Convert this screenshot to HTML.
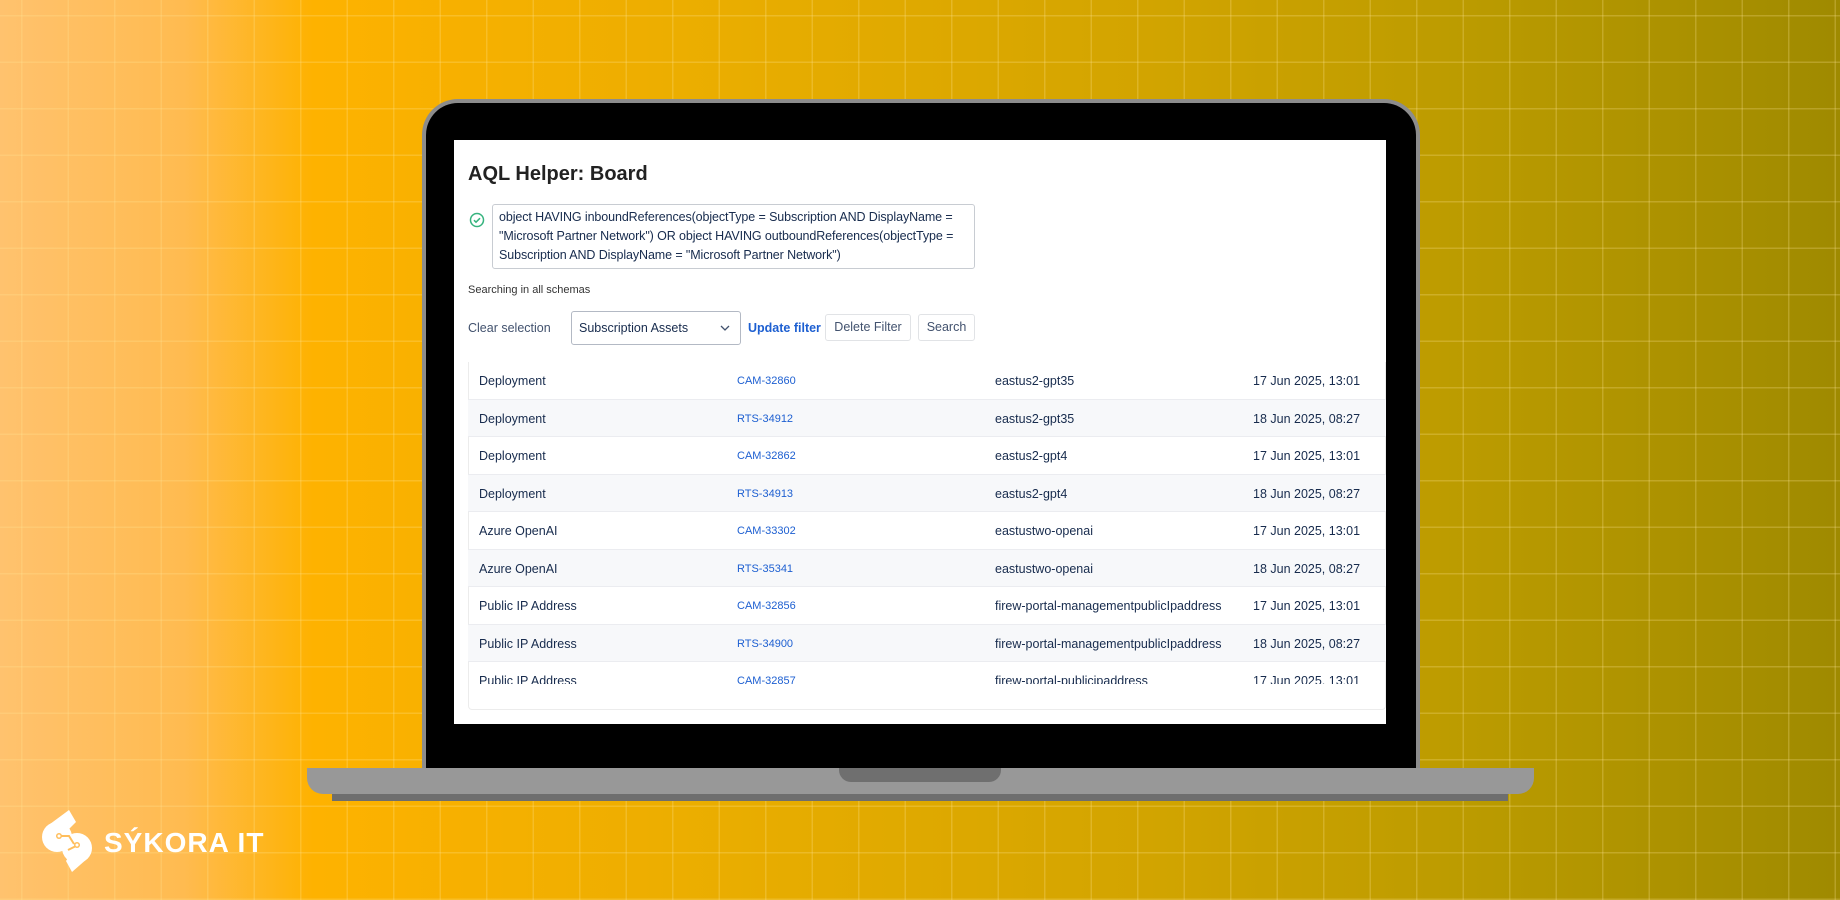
<!DOCTYPE html>
<html><head><meta charset="utf-8"><style>
*{margin:0;padding:0;box-sizing:border-box}
body{width:1840px;height:900px;overflow:hidden;position:relative;font-family:"Liberation Sans",sans-serif;
background:linear-gradient(90deg,#ffc26e 0%,#ffbb50 10%,#feb200 17%,#e9ad00 40%,#cfa300 65%,#bb9b00 80%,#9f8a00 100%)}
.grid{position:absolute;inset:0;
background-image:linear-gradient(90deg,rgba(255,230,150,.25) 1.5px,transparent 1.5px),linear-gradient(0deg,rgba(255,230,150,.25) 1.5px,transparent 1.5px);
background-size:46.5px 46.5px;background-position:21px 16.5px}
.lid{position:absolute;left:422px;top:99px;width:998px;height:672px;background:#000;border:4px solid #8c8c8c;border-bottom:none;border-radius:36px 36px 0 0}
.screen{position:absolute;left:454px;top:140px;width:932px;height:584px;background:#fff;overflow:hidden;color:#172b4d}
.base{position:absolute;left:307px;top:768px;width:1227px;height:26px;background:#989898;border-radius:0 0 16px 16px}
.shadow{position:absolute;left:332px;top:794px;width:1176px;height:7px;background:#6e6e6e}
.notch{position:absolute;left:839px;top:768px;width:162px;height:14px;background:#6f6f6f;border-radius:0 0 12px 12px}
.abs{position:absolute}
h1{position:absolute;left:14px;top:23px;font-size:20px;font-weight:bold;color:#222}
.ta{position:absolute;left:38px;top:64px;width:483px;height:65px;border:1px solid #c8ccd2;border-radius:3px;font-size:12.5px;line-height:19px;padding:3px 6px;color:#172b4d;letter-spacing:-.1px}
.small{left:14px;top:144px;font-size:11px;color:#333}
.row{position:absolute;left:14px;width:918px;height:37.5px;border-bottom:1px solid #ebecf0;font-size:12.5px}
.row span{position:absolute;top:12px}
.row .l{color:#1d5fd1;font-size:11px;top:13px}
.alt{background:#f7f8fa}
.btn{position:absolute;top:174px;height:27px;border:1px solid #e1e3e6;border-radius:3px;font-size:12.5px;color:#42526e;text-align:center;line-height:25px}
.c1{left:11px}.c2{left:269px}.c3{left:527px}.c4{left:785px}
</style></head><body>
<div class="grid"></div>
<div class="lid"></div>
<div class="base"></div><div class="shadow"></div><div class="notch"></div>
<div class="screen">
<h1>AQL Helper: Board</h1>
<svg class="abs" style="left:15px;top:72px" width="16" height="16" viewBox="0 0 16 16"><circle cx="8" cy="8" r="6.5" fill="none" stroke="#36b37e" stroke-width="1.5"/><path d="M5 8.2l2 2 4-4" fill="none" stroke="#36b37e" stroke-width="1.5"/></svg>
<div class="ta">object HAVING inboundReferences(objectType = Subscription AND DisplayName = "Microsoft Partner Network") OR object HAVING outboundReferences(objectType = Subscription AND DisplayName = "Microsoft Partner Network")</div>
<div class="abs small">Searching in all schemas</div>
<div class="abs" style="left:14px;top:181px;font-size:12.5px;color:#42526e">Clear selection</div>
<div class="abs" style="left:117px;top:171px;width:170px;height:34px;border:1px solid #b3b9c4;border-radius:3px;font-size:12.5px;padding:9px 7px;color:#172b4d">Subscription Assets<svg class="abs" style="right:10px;top:13px" width="10" height="7" viewBox="0 0 10 7"><path d="M1 1l4 4 4-4" fill="none" stroke="#42526e" stroke-width="1.3"/></svg></div>
<div class="abs" style="left:294px;top:181px;font-size:12.5px;color:#1d5fd1;font-weight:bold">Update filter</div>
<div class="btn" style="left:371px;width:86px">Delete Filter</div>
<div class="btn" style="left:464px;width:57px">Search</div>
<div class="abs" style="left:14px;top:222px;width:918px;height:348px;border:1px solid #ececec;border-top:none;border-radius:0 0 4px 4px"></div>
<div class="abs" style="left:0;top:222px;width:932px;height:322px;overflow:hidden">
<div class="row" style="top:0"><span class="c1">Deployment</span><span class="l c2">CAM-32860</span><span class="c3">eastus2-gpt35</span><span class="c4">17 Jun 2025, 13:01</span></div>
<div class="row alt" style="top:37.5px"><span class="c1">Deployment</span><span class="l c2">RTS-34912</span><span class="c3">eastus2-gpt35</span><span class="c4">18 Jun 2025, 08:27</span></div>
<div class="row" style="top:75px"><span class="c1">Deployment</span><span class="l c2">CAM-32862</span><span class="c3">eastus2-gpt4</span><span class="c4">17 Jun 2025, 13:01</span></div>
<div class="row alt" style="top:112.5px"><span class="c1">Deployment</span><span class="l c2">RTS-34913</span><span class="c3">eastus2-gpt4</span><span class="c4">18 Jun 2025, 08:27</span></div>
<div class="row" style="top:150px"><span class="c1">Azure OpenAI</span><span class="l c2">CAM-33302</span><span class="c3">eastustwo-openai</span><span class="c4">17 Jun 2025, 13:01</span></div>
<div class="row alt" style="top:187.5px"><span class="c1">Azure OpenAI</span><span class="l c2">RTS-35341</span><span class="c3">eastustwo-openai</span><span class="c4">18 Jun 2025, 08:27</span></div>
<div class="row" style="top:225px"><span class="c1">Public IP Address</span><span class="l c2">CAM-32856</span><span class="c3">firew-portal-managementpublicIpaddress</span><span class="c4">17 Jun 2025, 13:01</span></div>
<div class="row alt" style="top:262.5px"><span class="c1">Public IP Address</span><span class="l c2">RTS-34900</span><span class="c3">firew-portal-managementpublicIpaddress</span><span class="c4">18 Jun 2025, 08:27</span></div>
<div class="row" style="top:300px;border:none"><span class="c1">Public IP Address</span><span class="l c2">CAM-32857</span><span class="c3">firew-portal-publicipaddress</span><span class="c4">17 Jun 2025, 13:01</span></div>
</div>
</div>
<svg class="abs" style="left:38px;top:808px" width="60" height="68" viewBox="0 0 60 68">
<circle cx="19" cy="29" r="15" fill="#fff"/>
<path d="M8 19 L31 2 L38 14 L24 28 Z" fill="#fff"/>
<circle cx="39" cy="40" r="15" fill="#fff"/>
<path d="M50 50 L34 64 L28 53 L36 40 Z" fill="#fff"/>
<path d="M22 28 L31 28 L36 36" fill="none" stroke="#ffbe5c" stroke-width="2"/>
<path d="M38 38 L30 42" fill="none" stroke="#ffbe5c" stroke-width="2"/>
<circle cx="21" cy="28" r="3" fill="#ffbe5c"/><circle cx="21" cy="28" r="1.5" fill="#fff"/>
<circle cx="39" cy="37" r="3" fill="#ffbe5c"/><circle cx="39" cy="37" r="1.5" fill="#fff"/>
</svg>
<div class="abs" style="left:104px;top:827px;font-size:28px;font-weight:bold;color:#fff;letter-spacing:1px">SÝKORA IT</div>
</body></html>
